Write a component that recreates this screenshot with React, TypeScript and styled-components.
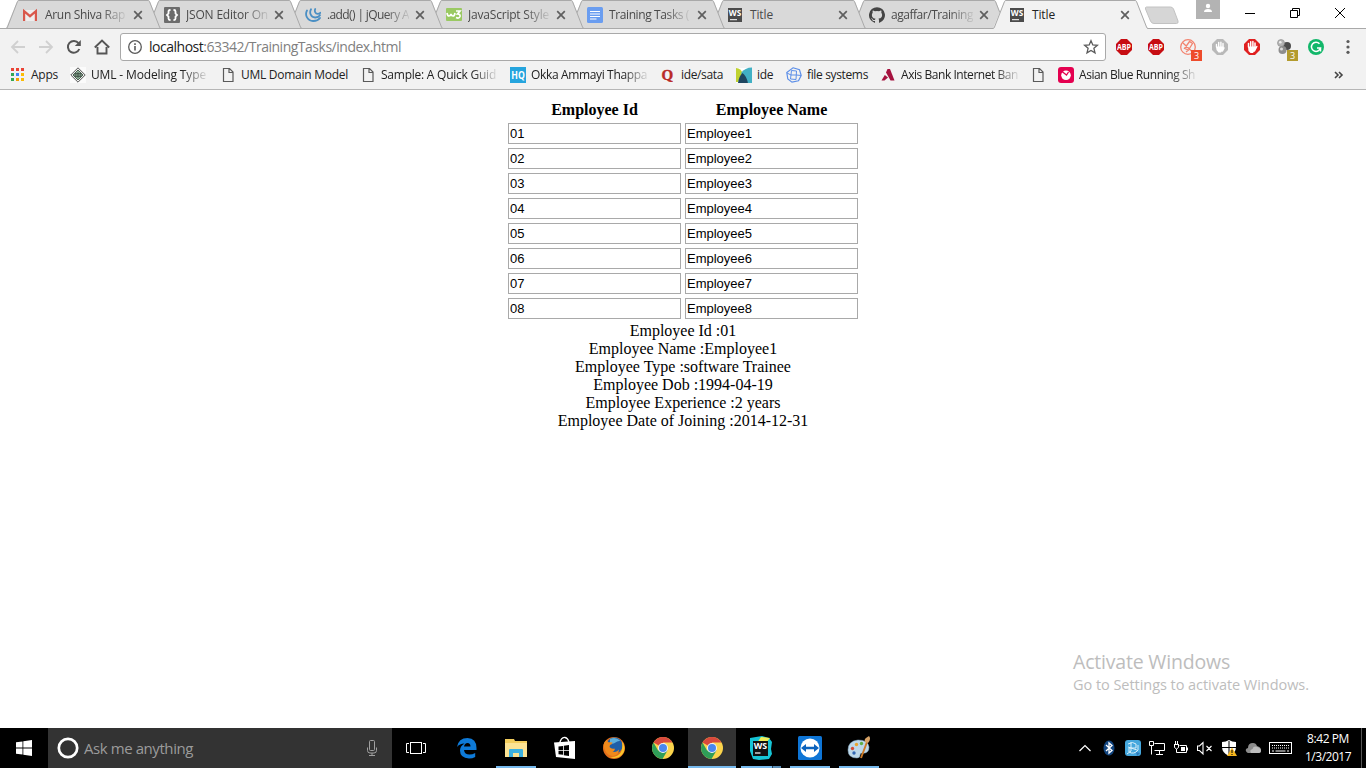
import React, { useLayoutEffect, useRef, useState } from 'react';
import styled, { createGlobalStyle, css } from 'styled-components';

const UI = '"Open Sans", "Noto Sans", sans-serif';

const GlobalStyle = createGlobalStyle`
  html, body { margin: 0; padding: 0; background: #fff; }
  body { overflow: hidden; }
  svg { display: block; flex: none; }
`;

/* ---------- text fitted to a column width ---------- */
const FitText = styled.span<{ $w: number; $fade?: boolean }>`
  display: block;
  flex: none;
  width: ${p => p.$w}px;
  white-space: pre;
  ${p => p.$fade && css`
    mask-image: linear-gradient(to right, #000 calc(100% - 24px), rgba(0, 0, 0, 0.12) 100%);
  `}
`;

function Fit({ w, fade, children }: { w: number; fade?: boolean; children: React.ReactNode }) {
  const ref = useRef<HTMLSpanElement>(null);
  const [spacing, setSpacing] = useState(0);
  useLayoutEffect(() => {
    const el = ref.current;
    if (!el) return;
    const count = (el.textContent || '').length;
    setSpacing((w - el.getBoundingClientRect().width) / count);
  }, [w]);
  return (
    <FitText $w={w} $fade={fade}>
      <span ref={ref} style={{ letterSpacing: spacing }}>{children}</span>
    </FitText>
  );
}

/* ---------- window ---------- */
const Screen = styled.div`
  width: 1366px;
  height: 768px;
  display: flex;
  flex-direction: column;
  overflow: hidden;
  background: #fff;
  font-family: ${UI};
`;

const Strip = styled.header`
  position: relative;
  height: 29px;
  display: flex;
  align-items: stretch;
  padding-left: 6px;
  box-sizing: border-box;
  background: linear-gradient(#fff 28px, #a9a9a9 28px);
`;

const TabBox = styled.div<{ $z: number }>`
  position: relative;
  z-index: ${p => p.$z};
  flex: none;
  width: 155px;
  height: 29px;
  margin-right: -14px;
  display: flex;
  align-items: center;
  box-sizing: border-box;
  padding: 0 0 0 17px;
  font-size: 12px;
  line-height: 16px;
`;

const TabShape = styled.svg`
  position: absolute;
  left: 0;
  top: 0;
  z-index: -1;
`;

const TabIcon = styled.span`
  width: 16px;
  height: 16px;
  margin-right: 6px;
`;

const TabText = styled.span<{ $active?: boolean }>`
  width: 88px;
  color: ${p => (p.$active ? '#222' : '#4a4a4a')};
`;

const NewTab = styled.svg`
  margin: 6px 0 0 10px;
`;

const Profile = styled.div`
  width: 24px;
  height: 19px;
  margin-left: 16px;
  display: flex;
  justify-content: center;
  background: #b3b3b3;
`;

const WindowButtons = styled.div`
  display: flex;
  margin: 7px 0 0 24px;
  gap: 33px;
  height: 12px;
`;

const Toolbar = styled.div`
  height: 36px;
  display: flex;
  align-items: center;
  box-sizing: border-box;
  padding-left: 10px;
  background: #f2f2f2;
`;

const Nav = styled.div`
  display: flex;
  gap: 12px;
  width: 110px;
`;

const Omnibox = styled.div`
  width: 986px;
  height: 28px;
  display: flex;
  align-items: center;
  box-sizing: border-box;
  padding: 0 6px;
  border: 1px solid #a9a9a9;
  border-radius: 3px;
  background: #fff;
  font-size: 14px;
  line-height: 20px;
  color: #808080;
`;

const Host = styled.span`
  color: #1b1b1b;
`;

const UrlText = styled.div`
  flex: 1;
  margin-left: 6px;
`;

const Extensions = styled.div`
  display: flex;
  gap: 16px;
  margin-left: 10px;
`;

const Bookmarks = styled.div`
  height: 25px;
  display: flex;
  align-items: center;
  box-sizing: border-box;
  padding: 0 0 4px 10px;
  background: #f2f2f2;
  border-bottom: 1px solid #b6b6b6;
`;

const Mark = styled.div<{ $w: number }>`
  flex: none;
  width: ${p => p.$w}px;
  display: flex;
  align-items: center;
  gap: 5px;
  font-size: 12px;
  line-height: 16px;
  color: #222;
`;

const Overflow = styled.svg`
  margin-left: 126px;
`;

/* ---------- document ---------- */
const Page = styled.main`
  position: relative;
  flex: 1;
  padding-top: 10px;
  display: flex;
  flex-direction: column;
  align-items: center;
  font-family: "Liberation Serif", serif;
  font-size: 16px;
  line-height: 18px;
  color: #000;
`;

const Grid = styled.div`
  display: grid;
  grid-template-columns: 173px 173px;
  column-gap: 4px;
  row-gap: 4px;
  margin-bottom: 3px;
`;

const HeadCell = styled.div`
  height: 19px;
  line-height: 20px;
  font-weight: bold;
  text-align: center;
`;

const Field = styled.input`
  width: 173px;
  height: 21px;
  margin: 0;
  box-sizing: border-box;
  padding: 1px;
  border: 1px solid #a9a9a9;
  border-radius: 0;
  outline: none;
  background: #fff;
  color: #000;
  font: 13px "Liberation Sans", sans-serif;
`;

const Line = styled.div``;

const Watermark = styled.aside`
  position: absolute;
  left: 1073px;
  top: 559px;
  font-family: ${UI};
  color: #bdbdbd;
`;

const WatermarkTitle = styled.div`
  font-size: 19.5px;
  line-height: 26px;
`;

const WatermarkHint = styled.div`
  font-size: 14.5px;
  line-height: 20px;
`;

/* ---------- taskbar ---------- */
const Taskbar = styled.footer`
  height: 40px;
  display: flex;
  background: #000;
`;

const Start = styled.div`
  width: 48px;
  display: flex;
  align-items: center;
  justify-content: center;
`;

const Search = styled.div`
  width: 344px;
  display: flex;
  align-items: center;
  box-sizing: border-box;
  padding: 0 12px 0 9px;
  background: #333;
  color: #9b9b9b;
  font-size: 15px;
  line-height: 20px;
`;

const SearchText = styled.div`
  flex: 1;
  margin-left: 5px;
`;

const Apps = styled.div`
  display: flex;
  gap: 1px;
`;

const TaskView = styled.div`
  width: 50px;
  height: 40px;
  display: flex;
  align-items: center;
  box-sizing: border-box;
  padding-left: 14px;
`;

const TaskButton = styled.div<{ $active?: boolean }>`
  position: relative;
  width: 48px;
  height: 40px;
  display: flex;
  align-items: center;
  justify-content: center;
  background: ${p => (p.$active ? '#333' : 'transparent')};
`;

const Underline = styled.i<{ $kind: 'full' | 'open' | 'split' }>`
  position: absolute;
  bottom: 0;
  height: 2px;
  left: ${p => (p.$kind === 'full' ? 0 : 4)}px;
  right: ${p => (p.$kind === 'full' ? 0 : 4)}px;
  background: ${p =>
    p.$kind === 'split'
      ? 'linear-gradient(to right, #76b9ed 31px, #2c4459 31px, #2c4459 32px, #5a8db5 32px)'
      : '#76b9ed'};
`;

const Tray = styled.div`
  margin-left: auto;
  display: flex;
  align-items: center;
`;

const TrayIcons = styled.div`
  display: flex;
  align-items: center;
  gap: 8px;
`;

const Clock = styled.div`
  width: 56px;
  margin-left: 8px;
  display: flex;
  flex-direction: column;
  align-items: center;
  gap: 2px;
  color: #fff;
  font-size: 12px;
  line-height: 16px;
`;

const Peek = styled.div`
  width: 4px;
  height: 40px;
  margin-left: 5px;
  border-left: 1px solid #555;
`;

/* ---------- icons ---------- */
const S = ({ n = 16, children }: { n?: number; children: React.ReactNode }) => (
  <svg width={n} height={n} viewBox={`0 0 ${n} ${n}`} fill="none">{children}</svg>
);

const ic: Record<string, React.ReactNode> = {
  gmail: <S><path d="M0 3h14v11H0z" fill="#eee" /><path d="M1.100 14V4.200L7 9.200l5.900-5V14" stroke="#d9584c" strokeWidth="2.200" /></S>,
  json: <S><rect width="16" height="16" rx="1" fill="#6c6c6c" /><path d="M6.500 3H6q-1.500 0-1.500 1.500V6.500L3 8l1.500 1.500v2q0 1.500 1.500 1.500h.5M9.500 3h.5q1.500 0 1.500 1.500V6.500L13 8l-1.500 1.500v2Q11.500 13 10 13h-.5" stroke="#fff" strokeWidth="1.800" /></S>,
  jquery: <S><path d="M2 3.500C-.5 8 2.500 13.800 8 14c3 .1 5.500-1 7-3M6 2.300C4 6 6 10.300 10 10.500c2.200.1 4-.8 5-2.200M10.200 2c-1 2.500.3 4.700 2.500 4.900 1.200 0 2-.4 2.600-1.100" stroke="#4a8fc4" strokeWidth="1.800" strokeLinecap="round" /></S>,
  w3: <S><rect y="1" width="16" height="13" fill="#9ac963" rx="1" /><path d="M1 6q.5 3 2 3t2-2q.5 2 2 2t2-3M10 4h4l-2.500 3q3 0 2.500 2.500-1 2.500-4 1" stroke="#fff" strokeWidth="1.700" /></S>,
  docs: <S><rect width="16" height="16" rx="1.500" fill="#6a9df0" /><path d="M3 4.500h10M3 7h10M3 9.500h10M3 12h6.500" stroke="#fff" strokeWidth="1.200" /></S>,
  ws: <S><rect x="0" y="1" width="14" height="14" fill="#4b4b4b" /><text x=".8" y="9.300" fontSize="9.500" fontWeight="bold" fontFamily="Open Sans" fill="#fff" textLength="12.400" lengthAdjust="spacingAndGlyphs">WS</text><path d="M2 12.700h7" stroke="#fff" strokeWidth="1" /></S>,
  github: <S><path fill="#444" d="M8 .2a8 8 0 0 0-2.530 15.590c.4.070.55-.17.55-.38v-1.490c-2.230.49-2.700-.95-2.700-.95-.36-.92-.89-1.170-.89-1.170-.73-.5.050-.49.050-.49.8.060 1.230.83 1.230.83.71 1.220 1.870.87 2.330.66.070-.52.280-.87.510-1.070-1.780-.2-3.650-.89-3.650-3.950 0-.87.310-1.590.82-2.150-.08-.2-.36-1.020.08-2.120 0 0 .67-.21 2.200.82a7.600 7.600 0 0 1 4 0c1.530-1.040 2.200-.82 2.200-.82.44 1.100.16 1.920.080 2.120.51.56.82 1.270.82 2.150 0 3.070-1.870 3.750-3.650 3.950.29.250.54.730.54 1.480v2.190c0 .21.150.46.550.38A8 8 0 0 0 8 .2z" /></S>,

  apps: <S>{[0, 1, 2].map(r => [0, 1, 2].map(c => <rect key={`${r}${c}`} x={1 + c * 5} y={1 + r * 5} width="3" height="3" fill={[['#ea4335', '#ea4335', '#ea4335'], ['#34a853', '#4285f4', '#fbbc05'], ['#34a853', '#f5a000', '#fbbc05']][r][c]} />))}</S>,
  uml: <S><rect width="16" height="16" fill="#fbfbfb" /><path d="M8 .8 15.200 8 8 15.200.8 8z" fill="#f1f3f1" stroke="#555" /><path d="M8 3 13 8 8 13 3 8z" fill="#93b59d" stroke="#4d5f52" /><path d="M5 6.500h6v3H5zM5 8h6M8 5v6" stroke="#3d4d42" strokeWidth=".8" /></S>,
  file: <S><path d="M3.500 1.500h6l3.500 3.500v9.500H3.500zM9 1.500v4h4" stroke="#5a5a5a" strokeWidth="1.200" /></S>,
  hq: <S><rect width="16" height="16" fill="#26a5de" /><text x="1.300" y="12" fontSize="10.500" fontWeight="bold" fontFamily="Open Sans" fill="#fff" textLength="13.500" lengthAdjust="spacingAndGlyphs">HQ</text></S>,
  quora: <S><text x="1.500" y="12.800" fontSize="15" fontWeight="bold" fontFamily="Liberation Serif" fill="#b92b27" stroke="#b92b27" strokeWidth=".4">Q</text></S>,
  ide: <S><rect y="1" width="16" height="15" fill="#fff" /><path d="M0 1q5 .5 6.500 5L2 15H0z" fill="#bfd230" /><path d="M5 6q4-5.500 11-5.500V16h-4z" fill="#41b0c4" /><path d="M2 16Q3 9 6.500 6q4 3 5.500 10z" fill="#1e4660" /></S>,
  fs: <S><path d="M7 .8 13.500 2.800 15.200 8.500 12.500 13.800 6 15.200 1.800 12 .8 5.500z" stroke="#5d8fe8" strokeWidth="1.200" /><path d="M5.500 3.500 4.500 12M10.500 4 10 12.500M5 8h5.500M5.500 3.500l5 .5M1 6l4 2M10.500 8l4.500.5M4.500 12l5.500.5" stroke="#5d8fe8" strokeWidth="1" /></S>,
  axis: <S><path d="M7.500 2H10l4.500 11.500h-4L6 5.500z" fill="#a5123f" /><path d="M4.800 8 8 10.500 4.500 13.500H1.500z" fill="#a5123f" /></S>,
  asian: <S><rect width="16" height="16" rx="3" fill="#e4004f" /><circle cx="8" cy="8.300" r="4.800" fill="#fff" /><path d="M4 4.500 8.500 8 10.500 5" stroke="#e4004f" strokeWidth="1.300" /></S>,

  back: <S><path d="M15 8H2.500M8 2 2 8l6 6" stroke="#d0d0d0" strokeWidth="1.800" /></S>,
  fwd: <S><path d="M1 8h12.500M8 2l6 6-6 6" stroke="#d0d0d0" strokeWidth="1.800" /></S>,
  reload: <S><path d="M13.300 10A5.900 5.900 0 1 1 12.500 4.200" stroke="#555" strokeWidth="2" /><path d="M14.800 1v6H8.800z" fill="#555" /></S>,
  home: <S><path d="M3.500 8v6.500h9V8M.8 8.500 8 1.500l7.200 7" stroke="#555" strokeWidth="1.900" /></S>,
  info: <S><circle cx="8" cy="8" r="6.300" stroke="#5a5a5a" strokeWidth="1.300" /><path d="M8 7v4.500M8 4.200v1.700" stroke="#5a5a5a" strokeWidth="1.600" /></S>,
  star: <S><path d="m8 1.700 1.800 4.200 4.600.4-3.500 3 1.100 4.500L8 11.400l-4 2.400 1.100-4.500-3.500-3 4.600-.4z" stroke="#5a5a5a" strokeWidth="1.300" /></S>,
  abp: <S><path d="M5 0h6l5 5v6l-5 5H5l-5-5V5z" fill="#c70d12" /><text x="1" y="11.300" fontSize="9" fontWeight="bold" fontFamily="Open Sans" fill="#fff" textLength="14" lengthAdjust="spacingAndGlyphs">ABP</text></S>,
  pin: (
    <svg width="16" height="16" viewBox="0 0 16 16" fill="none" overflow="visible">
      <circle cx="8" cy="8" r="7.300" stroke="#f2836f" strokeWidth="1.300" />
      <path d="M2.500 3.500l10 9.500M4.500 9.500l4 1.500 4-6.500-3-2zM6 13l2.500-2" stroke="#f2836f" strokeWidth="1.300" />
      <rect x="11" y="11" width="11" height="11" fill="#ee4b2b" /><text x="14" y="20" fontSize="9" fontFamily="Open Sans" fill="#fff">3</text>
    </svg>
  ),
  handGray: <S><path d="M5 0h6l5 5v6l-5 5H5l-5-5V5z" fill="#b9b9b9" /><path d="M4.500 8V5.500M6.700 8V3.500M8.900 8V3.200M11 9V4.500M12 9l-1.500 3" stroke="#fff" strokeWidth="1.400" strokeLinecap="round" /><path d="M4 7.500h7.500L11 11l-2 2.500H6.500L4.500 11z" fill="#fff" /></S>,
  handRed: <S><path d="M5 0h6l5 5v6l-5 5H5l-5-5V5z" fill="#e02020" /><path d="M4.500 8V4.500M6.700 8V2.800M8.900 8V2.500M11 9V4M12.800 7.500 10.500 12" stroke="#fff" strokeWidth="1.500" strokeLinecap="round" /><path d="M4 7.500h7.500L11 11l-2 3H6.500L4.500 12z" fill="#fff" /></S>,
  balls: (
    <svg width="16" height="16" viewBox="0 0 16 16" overflow="visible">
      <circle cx="11" cy="7" r="4" fill="#4d4d4d" /><circle cx="5" cy="4" r="3.500" fill="#b4b4b4" stroke="#888" strokeWidth=".6" /><circle cx="6.500" cy="11" r="4" fill="#8d8d8d" /><circle cx="5.500" cy="10" r="1.500" fill="#ddd" /><circle cx="4.300" cy="3.300" r="1.300" fill="#eee" />
      <rect x="11" y="11" width="11" height="11" fill="#b39b2e" /><text x="14" y="20" fontSize="9" fontFamily="Open Sans" fill="#fff">3</text>
    </svg>
  ),
  grammarly: <S><circle cx="8" cy="8" r="8" fill="#12b76a" /><path d="M11.500 4.700A4.600 4.600 0 1 0 12.500 9H9M12.500 9v3.500" stroke="#fff" strokeWidth="1.500" /></S>,
  more: <S><circle cx="8" cy="2.500" r="1.600" fill="#5a5a5a" /><circle cx="8" cy="8" r="1.600" fill="#5a5a5a" /><circle cx="8" cy="13.300" r="1.600" fill="#5a5a5a" /></S>,
};

const Chrome = () => (
  <S n={22}>
    <circle cx="11" cy="11" r="11" fill="#fbd44c" />
    <path d="M11 11 1.500 5.500A11 11 0 0 1 20.500 5.500H11z" fill="#d9493d" />
    <path d="M1.500 5.500A11 11 0 0 0 10.500 22l5-8.500L11 11 6.200 13.700z" fill="#2f9e58" />
    <circle cx="11" cy="11" r="5" fill="#f4f4f4" /><circle cx="11" cy="11" r="4" fill="#4a86ee" />
  </S>
);

const tabs: { icon: string; text: string; w: number; fade?: boolean }[] = [
  { icon: 'gmail', text: 'Arun Shiva Rap', w: 80, fade: true },
  { icon: 'json', text: 'JSON Editor On', w: 82, fade: true },
  { icon: 'jquery', text: '.add() | jQuery A', w: 82, fade: true },
  { icon: 'w3', text: 'JavaScript Style', w: 81, fade: true },
  { icon: 'docs', text: 'Training Tasks (', w: 80, fade: true },
  { icon: 'ws', text: 'Title', w: 23 },
  { icon: 'github', text: 'agaffar/Training', w: 82, fade: true },
  { icon: 'ws', text: 'Title', w: 23 },
];

const marks: { icon: string; text?: string; w: number; tw?: number; fade?: boolean }[] = [
  { icon: 'apps', text: 'Apps', w: 60, tw: 27 },
  { icon: 'uml', text: 'UML - Modeling Type', w: 150, tw: 115, fade: true },
  { icon: 'file', text: 'UML Domain Model', w: 140, tw: 107 },
  { icon: 'file', text: 'Sample: A Quick Guid', w: 150, tw: 115, fade: true },
  { icon: 'hq', text: 'Okka Ammayi Thappa', w: 150, tw: 116, fade: true },
  { icon: 'quora', text: 'ide/sata', w: 76, tw: 42 },
  { icon: 'ide', text: 'ide', w: 50, tw: 16 },
  { icon: 'fs', text: 'file systems', w: 94, tw: 61 },
  { icon: 'axis', text: 'Axis Bank Internet Ban', w: 150, tw: 117, fade: true },
  { icon: 'file', w: 28 },
  { icon: 'asian', text: 'Asian Blue Running Sh', w: 150, tw: 116, fade: true },
];

const details = [
  'Employee Id :01',
  'Employee Name :Employee1',
  'Employee Type :software Trainee',
  'Employee Dob :1994-04-19',
  'Employee Experience :2 years',
  'Employee Date of Joining :2014-12-31',
];

function Tab({ t, i }: { t: (typeof tabs)[number]; i: number }) {
  const active = i === tabs.length - 1;
  return (
    <TabBox $z={active ? 20 : 10 - i}>
      <TabShape width="155" height="29" viewBox="0 0 155 29">
        <path d="M0 28.500 11.500.5H143.500L154.500 28.500V29H0z" fill={active ? '#f2f2f2' : '#d9d9d9'} />
        <path d="M0 28.500q1 0 1.500-1.500L11.500 1.500q.4-1 1.500-1H142q1 0 1.500 1l10 25.500q.6 1.500 1.500 1.500" fill="none" stroke="#a9a9a9" />
        {!active && <path d="M0 28.500h155" stroke="#a9a9a9" />}
      </TabShape>
      <TabIcon>{ic[t.icon]}</TabIcon>
      <TabText $active={active}><Fit w={t.w} fade={t.fade}>{t.text}</Fit></TabText>
      <svg width="10" height="10" viewBox="0 0 10 10"><path d="m1.200 1.200 7.600 7.600m0-7.600-7.600 7.600" stroke="#5f5f5f" strokeWidth="1.700" /></svg>
    </TabBox>
  );
}

export default function App() {
  return (
    <>
      <GlobalStyle />
      <Screen>
        <Strip>
          {tabs.map((t, i) => <Tab key={i} t={t} i={i} />)}
          <NewTab width="36" height="19" viewBox="0 0 36 19">
            <path d="M2.500 1h24q2 0 3 2l4.500 12q.6 2.500-1.500 2.500H10q-2.500 0-3.500-2.500L1.500 3Q1 1 2.500 1z" fill="#d6d6d6" stroke="#c2c2c2" />
          </NewTab>
          <Profile>
            <svg width="10" height="15" viewBox="0 0 10 15"><circle cx="5" cy="6" r="2.200" fill="#fff" /><path d="M1 12q0-3 4-3t4 3z" fill="#fff" /></svg>
          </Profile>
          <WindowButtons>
            <svg width="12" height="12"><path d="M1 6.500h10" stroke="#000" /></svg>
            <svg width="12" height="12" fill="none" stroke="#000"><path d="M1.500 3.500h7v7h-7zM3.500 3.500v-2h7v7h-2" /></svg>
            <svg width="12" height="12" stroke="#000"><path d="m1 1 10 10m0-10L1 11" /></svg>
          </WindowButtons>
        </Strip>
        <Toolbar>
          <Nav>{ic.back}{ic.fwd}{ic.reload}{ic.home}</Nav>
          <Omnibox>
            {ic.info}
            <UrlText><Fit w={252}><Host>localhost</Host>:63342/TrainingTasks/index.html</Fit></UrlText>
            {ic.star}
          </Omnibox>
          <Extensions>
            {['abp', 'abp', 'pin', 'handGray', 'handRed', 'balls', 'grammarly', 'more'].map((k, i) => <React.Fragment key={i}>{ic[k]}</React.Fragment>)}
          </Extensions>
        </Toolbar>
        <Bookmarks>
          {marks.map((m, i) => (
            <Mark key={i} $w={m.w}>
              {ic[m.icon]}
              {m.text && <Fit w={m.tw!} fade={m.fade}>{m.text}</Fit>}
            </Mark>
          ))}
          <Overflow width="10" height="8" viewBox="0 0 10 8"><path d="m1 1 3 3-3 3m4-6 3 3-3 3" fill="none" stroke="#444" strokeWidth="1.600" /></Overflow>
        </Bookmarks>

        <Page>
          <Grid>
            <HeadCell>Employee Id</HeadCell>
            <HeadCell>Employee Name</HeadCell>
            {[1, 2, 3, 4, 5, 6, 7, 8].map(n => (
              <React.Fragment key={n}>
                <Field defaultValue={`0${n}`} />
                <Field defaultValue={`Employee${n}`} />
              </React.Fragment>
            ))}
          </Grid>
          {details.map(d => <Line key={d}>{d}</Line>)}
          <Watermark>
            <WatermarkTitle><Fit w={157}>Activate Windows</Fit></WatermarkTitle>
            <WatermarkHint><Fit w={236}>Go to Settings to activate Windows.</Fit></WatermarkHint>
          </Watermark>
        </Page>

        <Taskbar>
          <Start><S><path d="M0 2.300 6.500 1.400V7.600H0zM7.300 1.300 16 0v7.600H7.300zM0 8.400h6.500v6.200L0 13.700zM7.300 8.400H16V16l-8.700-1.300z" fill="#fff" /></S></Start>
          <Search>
            <S n={22}><circle cx="11" cy="11" r="9.200" stroke="#fff" strokeWidth="2.700" /></S>
            <SearchText><Fit w={109}>Ask me anything</Fit></SearchText>
            <svg width="16" height="16" viewBox="0 0 16 16" fill="none" stroke="#a0a0a0"><rect x="5.500" y=".5" width="5" height="10" rx="1" /><path d="M3.500 7.500v3q0 2.500 2.500 2.500h4q2.500 0 2.500-2.500v-3M8 13v2.500M5 15.500h6" /></svg>
          </Search>
          <Apps>
            <TaskView>
              <svg width="20" height="14" viewBox="0 0 20 14" fill="none" stroke="#fff"><rect x="4.500" y="1.500" width="11" height="11" /><path d="M3 2.500H.5v9H3M17 2.500h2.500v9H17" /></svg>
            </TaskView>
            <TaskButton>
              <svg width="22" height="22" viewBox="0 0 22 22"><path d="M1 10Q2.500 1 11.500 1 20.500 1.500 20.500 11v2H8q.5 4.500 5.500 4.500 3 0 5.700-1.500v4Q16.500 21.500 13 21.500 4 21 4 13.500q0-4.500 4.500-7Q3.500 6.500 1 10zM8 9.500h6.500Q14.500 6 11.500 6 8.700 6 8 9.500z" fill="#0e7ad8" /></svg>
            </TaskButton>
            <TaskButton>
              <svg width="22" height="20" viewBox="0 0 22 20"><path d="M0 1h9l1 2h12v16H0z" fill="#f3cd5d" /><path d="M0 5h22v14H0z" fill="#fce394" /><path d="M4 19v-7q0-1 1-1h12q1 0 1 1v7h-4v-4H8v4z" fill="#3cb1e0" /></svg>
              <Underline $kind="open" />
            </TaskButton>
            <TaskButton>
              <svg width="22" height="24" viewBox="0 0 22 24"><path d="M5.500 8Q7 1 11 1.500q3 .5 4 5" fill="none" stroke="#fff" strokeWidth="1.300" /><path d="M0 6.500 21 5v18L2 21z" fill="#fff" /><path d="m4.500 10.500 4.500-.6v4H4.500zm5.300-.7L15 9v4.900H9.800zm-5.300 5H9v4l-4.500-.5zm5.300 0H15V20l-5.200-.8z" fill="#000" /></svg>
            </TaskButton>
            <TaskButton>
              <S n={22}><circle cx="11" cy="11" r="11" fill="#e5701a" /><circle cx="11.500" cy="8.500" r="8" fill="#1f5fa8" /><path d="M7 2Q13-.5 17.500 4q-3-.5-5 1.500T7 6z" fill="#5db0dd" /><path d="M.5 8Q1.500 4 4 2.500q0 2 1.500 2.800 2-.3 4 .2-.5 2-2.500 2.500l-.5 2q2 2.500 5 1.500 1 2-2 3 4 1.500 6.500-2-.5 6.500-6.500 6.500-7 0-9-11z" fill="#f08a1c" /><path d="M19 4.500Q21.500 7 21.500 11q0 6-5.500 9-5 2-9 0 8 .5 11-5 2-4 1-10.500z" fill="#fbc52c" /></S>
            </TaskButton>
            <TaskButton><Chrome /></TaskButton>
            <TaskButton $active><Chrome /><Underline $kind="full" /></TaskButton>
            <TaskButton>
              <S n={24}><path d="m1 2 12-2 7 2 3 4-1 7 1 5-3 5-10 1-6-1L1 15z" fill="#16c5d6" /><path d="m12 1 9 1-4 5H8z" fill="#f0ed55" /><rect x="4" y="5" width="15" height="15" fill="#111" /><text x="4.800" y="13.300" fontSize="9.500" fontWeight="bold" fontFamily="Open Sans" fill="#fff" textLength="13.400" lengthAdjust="spacingAndGlyphs">WS</text><path d="M6 17h5.500" stroke="#fff" strokeWidth="1.200" /></S>
              <Underline $kind="split" />
            </TaskButton>
            <TaskButton>
              <S n={24}><rect width="24" height="24" rx="1.500" fill="#0e75d6" /><circle cx="12" cy="12" r="9.500" fill="#fff" /><path d="m3 12 5-4v2.700h8V8l5 4-5 4v-2.700H8V16z" fill="#0b62bd" /></S>
              <Underline $kind="open" />
            </TaskButton>
            <TaskButton>
              <S n={24}><path d="M1 14Q1 5 11 4q10 0 11 7 0 7-7 6-2 0-2 2 0 3-3 3-9 0-9-8z" fill="#bdd8ea" stroke="#8db3cc" strokeWidth=".5" /><circle cx="5.500" cy="12.500" r="1.700" fill="#d54a35" /><circle cx="9.500" cy="8.500" r="1.700" fill="#e8a32e" /><circle cx="14.500" cy="7.500" r="1.700" fill="#5fae45" /><circle cx="7" cy="17" r="1.700" fill="#3268b5" /><path d="m14 22 6-16" stroke="#cc7a27" strokeWidth="2" /><path d="M18 6q-1-3 1-4l3-2q2.500 3-1 7z" fill="#d7a366" /></S>
              <Underline $kind="open" />
            </TaskButton>
          </Apps>
          <Tray>
            <TrayIcons>
              <S><path d="m2.500 11 5.500-5.500L13.500 11" stroke="#fff" strokeWidth="1.200" /></S>
              <S><ellipse cx="8" cy="8" rx="5.500" ry="7.500" fill="#12457f" /><path d="m5 5 6 5.500L8 13V3l3 2.500L5 11" stroke="#fff" strokeWidth="1.300" /></S>
              <S><rect width="16" height="16" rx="3" fill="#45a7dd" /><path d="M3 4q5-3 8 0v4H4v4q5 3 9-2V5M3 7l9 3M6 2v9M2 14l4-3" stroke="#d8effa" strokeWidth="1" /><path d="M11 12l4 1-3 3z" fill="#2d78ba" /></S>
              <S><path d="M5.500 3.500h10v7h-10M10.500 11v3M7 14.500h7M.5 1.500h4v4h-4zM2.500 6v8.500" stroke="#fff" /></S>
              <S><path d="M6.500 5.500h7v7h-8M14.500 7.500v3M1 4.500h5M2.500 1v3M4.500 1v3M1.500 5v2.500l2 1.500 2-1.500V5M3.500 9v3.500h3" stroke="#fff" /><path d="M8 7h4v4H8z" fill="#fff" /></S>
              <S><path d="M.5 6v4.500h2L6 14V2.500L2.500 6zM9.500 6l5 5m0-5-5 5" stroke="#fff" strokeWidth="1.100" /></S>
              <S><path d="M8 0q3 2 7 2v5q0 6-7 9-7-3-7-9V2q4 0 7-2z" fill="#fff" /><path d="M8 1v14M1 7.500h14" stroke="#000" /><path d="m11 7.500 5 8.500H6z" fill="#f5b61f" /><path d="M11 10v3m0 1v1" stroke="#000" /></S>
              <S><path d="M2 12.500Q-1 9 3 8q0-5 5-5 3 0 4 3 4 1 4 4 0 3-3 3H3z" fill="#8c8c8c" /><path d="M6 13q-2-3 1.500-4 1-3.500 5-2Q16 8 16 11q0 2-2 2z" fill="#bdbdbd" /></S>
              <svg width="23" height="13" viewBox="0 0 23 13" fill="none" stroke="#fff"><rect x=".5" y=".5" width="22" height="11" /><path d="M3 3.500h17M3 6h17" strokeDasharray="1 1" /><path d="M3 9h2m1.500 0h10M18 9h2" /></svg>
            </TrayIcons>
            <Clock>
              <Fit w={42}>8:42 PM</Fit>
              <Fit w={46}>1/3/2017</Fit>
            </Clock>
            <Peek />
          </Tray>
        </Taskbar>
      </Screen>
    </>
  );
}
